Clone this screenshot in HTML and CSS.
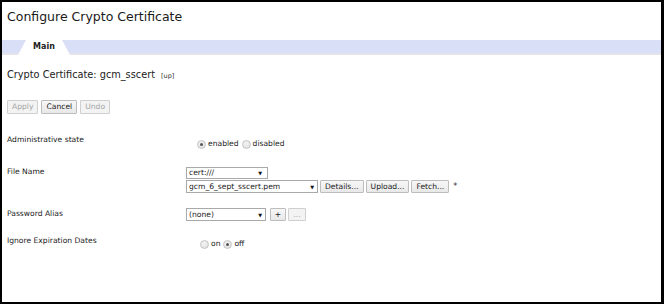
FILE: index.html
```
<!DOCTYPE html>
<html>
<head>
<meta charset="utf-8">
<link rel="stylesheet" href="styles.css">
</head>
<body>
<div class="page">
  <h1 class="title">Configure Crypto Certificate</h1>
  <div class="tabbar"><div class="tab">Main</div></div>
  <div class="heading">Crypto Certificate: gcm_sscert <span class="up">[up]</span></div>
  <div class="actions">
    <button class="btn disabled">Apply</button>
    <button class="btn">Cancel</button>
    <button class="btn disabled">Undo</button>
  </div>
  <div class="row row-admin">
    <div class="label">Administrative state</div>
    <div class="control radios">
      <span class="radio checked"></span><span class="rlabel">enabled</span>
      <span class="radio"></span><span class="rlabel">disabled</span>
    </div>
  </div>
  <div class="row row-file">
    <div class="label">File Name</div>
    <div class="control stack">
      <div class="select sel-dir"><span>cert:///</span><span class="arrow">▼</span></div>
      <div class="line">
        <div class="select sel-file"><span>gcm_6_sept_sscert.pem</span><span class="arrow">▼</span></div>
        <button class="btn sbtn">Details...</button>
        <button class="btn sbtn">Upload...</button>
        <button class="btn sbtn">Fetch...</button>
        <span class="req">*</span>
      </div>
    </div>
  </div>
  <div class="row row-pass">
    <div class="label">Password Alias</div>
    <div class="control line">
      <div class="select sel-pass"><span>(none)</span><span class="arrow">▼</span></div>
      <button class="btn sbtn plus">+</button>
      <button class="btn sbtn dots disabled">...</button>
    </div>
  </div>
  <div class="row row-ignore">
    <div class="label">Ignore Expiration Dates</div>
    <div class="control radios radios2">
      <span class="radio"></span><span class="rlabel">on</span>
      <span class="radio checked"></span><span class="rlabel">off</span>
    </div>
  </div>
</div>
</body>
</html>
```
FILE: styles.css
```
html, body {
  margin: 0;
  padding: 0;
  background: #000;
}
.page {
  box-sizing: border-box;
  width: 664px;
  height: 304px;
  border: 2px solid #000;
  border-right-width: 3px;
  background: #fff;
  font-family: "DejaVu Sans", Verdana, sans-serif;
  color: #222;
  overflow: hidden;
}
.title {
  margin: 0;
  padding: 7px 0 0 5px;
  font-size: 12.5px;
  font-weight: normal;
  line-height: 16px;
  color: #1a1a1a;
}
.tabbar {
  margin-top: 15px;
  height: 13px;
  background: #d9dff7;
  border-bottom: 2px solid #e3e3e8;
  display: flex;
  align-items: flex-end;
}
.tab {
  margin-left: 16px;
  margin-bottom: -2px;
  width: 52px;
  height: 15px;
  background: #fff;
  clip-path: polygon(8px 0, 44px 0, 52px 100%, 0 100%);
  font-size: 8px;
  font-weight: bold;
  line-height: 13px;
  text-align: center;
  color: #222;
}
.heading {
  margin: 13px 0 0 5px;
  font-size: 9.75px;
  line-height: 14px;
  color: #222;
}
.up {
  font-size: 6.5px;
  margin-left: 3px;
  color: #333;
}
.actions {
  margin: 17px 0 0 5px;
  display: flex;
  gap: 3px;
}
.btn {
  font-family: "DejaVu Sans", Verdana, sans-serif;
  font-size: 7.6px;
  height: 14px;
  line-height: 12px;
  padding: 0 4px;
  margin: 0;
  background: linear-gradient(#f7f7f7, #e8e8e8);
  border: 1px solid #bdbdbd;
  border-radius: 1px;
  color: #222;
}
.btn.disabled {
  color: #a6a6a6;
  border-color: #cfcfcf;
  background: #f3f3f3;
}
.row {
  display: flex;
  margin-left: 5px;
}
.label {
  width: 179px;
  flex: none;
  font-size: 7.6px;
  line-height: 12px;
  color: #222;
}
.row-admin { margin-top: 20px; }
.row-file { margin-top: 16px; }
.row-pass { margin-top: 15px; }
.row-ignore { margin-top: 14px; }
.radios {
  display: flex;
  align-items: center;
  padding-left: 11px;
  margin-top: 4px;
  font-size: 7.6px;
  line-height: 12px;
}
.radios2 { padding-left: 14px; margin-top: 3px; }
.radio {
  box-sizing: border-box;
  width: 9px;
  height: 9px;
  border-radius: 50%;
  border: 1px solid #c4c4c4;
  background: radial-gradient(circle at 40% 35%, #f4f4f4, #dcdcdc);
  display: inline-flex;
  align-items: center;
  justify-content: center;
  margin-right: 2px;
}
.radio.checked::after {
  content: "";
  width: 3px;
  height: 3px;
  border-radius: 50%;
  background: #555;
}
.rlabel { margin-right: 3px; }
.stack {
  display: flex;
  flex-direction: column;
  margin-top: 1px;
}
.line {
  display: flex;
  align-items: center;
  gap: 2px;
}
.select {
  box-sizing: border-box;
  height: 12px;
  border: 1px solid #a9a9a9;
  background: #fff;
  display: flex;
  align-items: center;
  justify-content: space-between;
  padding: 0 3px 0 2px;
  font-size: 7.6px;
  line-height: 10px;
  color: #222;
}
.arrow {
  font-size: 5px;
  color: #111;
}
.sel-dir { width: 82px; margin-bottom: 1px; padding-right: 5px; }
.sel-file { width: 132px; height: 13px; }
.sel-pass { width: 80px; height: 13px; margin-right: 2px; }
.sbtn { height: 13px; line-height: 11px; padding: 0 4px; font-size: 7.6px; }
.plus { width: 16px; padding: 0; }
.dots { width: 18px; padding: 0; }
.req { font-size: 8px; margin-left: 2px; color: #333; }
```
